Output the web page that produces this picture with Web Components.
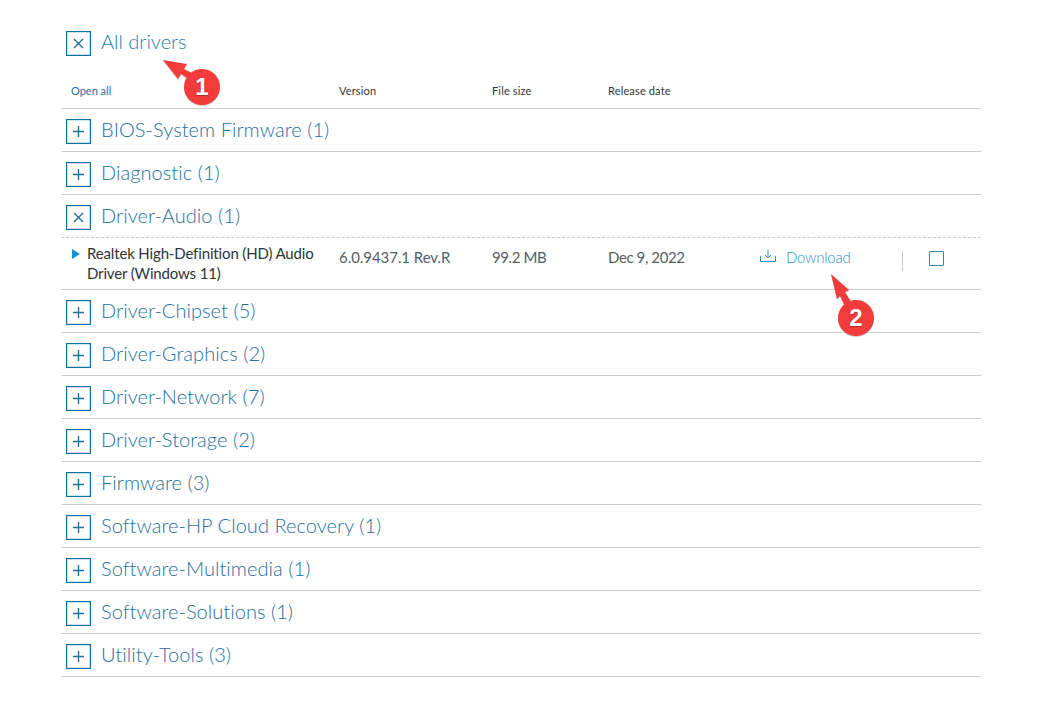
<!DOCTYPE html>
<html>
<head>
<meta charset="utf-8">
<title>All drivers</title>
<style>
  html, body { margin: 0; padding: 0; background: #ffffff; }
  body { font-family: Lato, "Noto Sans", sans-serif; overflow: hidden; }
</style>
</head>
<body>
<driver-list>
  <toggle-heading slot="heading" open>All drivers</toggle-heading>
  <driver-category label="BIOS-System Firmware (1)"></driver-category>
  <driver-category label="Diagnostic (1)"></driver-category>
  <driver-category label="Driver-Audio (1)" open>
    <driver-row version="6.0.9437.1 Rev.R" size="99.2 MB" date="Dec 9, 2022">Realtek High-Definition (HD) Audio Driver (Windows 11)</driver-row>
  </driver-category>
  <driver-category label="Driver-Chipset (5)"></driver-category>
  <driver-category label="Driver-Graphics (2)"></driver-category>
  <driver-category label="Driver-Network (7)"></driver-category>
  <driver-category label="Driver-Storage (2)"></driver-category>
  <driver-category label="Firmware (3)"></driver-category>
  <driver-category label="Software-HP Cloud Recovery (1)"></driver-category>
  <driver-category label="Software-Multimedia (1)"></driver-category>
  <driver-category label="Software-Solutions (1)"></driver-category>
  <driver-category label="Utility-Tools (3)"></driver-category>
</driver-list>
<step-callout number="1" style="left:202px;top:87px"></step-callout>
<step-callout number="2" style="left:856px;top:318px"></step-callout>

<script>
const PLUS = '<path d="M12.5 7v11M7 12.5h11"/>';
const CROSS = '<path d="M8 8l9 9M17 8l-9 9"/>';

class ToggleBox extends HTMLElement {
  connectedCallback() {
    const root = this.shadowRoot || this.attachShadow({ mode: 'open' });
    root.innerHTML = `
      <style>
        :host { display: block; width: 25px; height: 25px; flex: none; }
        svg { display: block; }
        rect { fill: none; stroke: #0b6fa4; stroke-width: 1.2; }
        path { fill: none; stroke: #1d6f9c; stroke-width: 1.4; }
      </style>
      <svg width="25" height="25" viewBox="0 0 25 25">
        <rect x=".6" y=".6" width="23.8" height="23.8"/>
        ${this.hasAttribute('open') ? CROSS : PLUS}
      </svg>`;
  }
}

class ToggleHeading extends HTMLElement {
  connectedCallback() {
    const root = this.attachShadow({ mode: 'open' });
    root.innerHTML = `
      <style>
        :host { display: flex; align-items: center; gap: 10px; height: 25px; padding-left: 5px; }
        span { font-size: 20px; font-weight: 300; color: #1f7fb0; position: relative; top: -3px; }
      </style>
      <toggle-box ${this.hasAttribute('open') ? 'open' : ''}></toggle-box>
      <span><slot></slot></span>`;
  }
}

class DriverCategory extends HTMLElement {
  connectedCallback() {
    const root = this.attachShadow({ mode: 'open' });
    const open = this.hasAttribute('open');
    root.innerHTML = `
      <style>
        :host { display: block; }
        .head { display: flex; align-items: center; gap: 10px; height: 42px; padding: 0 0 0 5px; box-sizing: border-box; }
        .head toggle-box { position: relative; top: 1px; }
        .label { font-size: 20px; font-weight: 300; color: #1f6f9e; letter-spacing: .05px; position: relative; top: -1px; white-space: nowrap; }
        .line { border-bottom: 1px solid #cccccc; }
      </style>
      <div class="head">
        <toggle-box ${open ? 'open' : ''}></toggle-box>
        <span class="label">${this.getAttribute('label')}</span>
      </div>
      ${open ? '<slot></slot>' : ''}
      <div class="line"></div>`;
  }
}

class DriverRow extends HTMLElement {
  connectedCallback() {
    const root = this.attachShadow({ mode: 'open' });
    root.innerHTML = `
      <style>
        :host {
          display: grid;
          grid-template-columns: 278px 153px 116px 152px 142px 27px 1fr;
          border-top: 1px dashed #cccccc;
          height: 52px;
          box-sizing: border-box;
          padding-top: 5px;
          font-size: 15px;
          color: #555c64;
        }
        .name { display: flex; gap: 7px; padding-left: 11px; color: #2f3338; line-height: 20px; letter-spacing: -.15px; }
        .name svg { flex: none; margin-top: 6px; }
        .cell { line-height: 20px; padding-top: 4px; white-space: nowrap; }
        .ver { letter-spacing: -.05px; }
        .tight { letter-spacing: -.4px; }
        .dl { display: flex; align-items: flex-start; gap: 10px; color: #2a93cf; font-weight: 300; }
        .dl svg { flex: none; margin-top: 2px; }
        .dl span { letter-spacing: -.25px; }
        .sep { width: 1px; height: 20px; background: #c8c8c8; margin-top: 8px; }
        .check { width: 13px; height: 13px; border: 1px solid #3a83ad; margin-top: 8px; border-radius: 1px; }
      </style>
      <div class="name">
        <svg width="8" height="10" viewBox="0 0 8 10"><path d="M0 0l8 5-8 5z" fill="#1492d6"/></svg>
        <span><slot></slot></span>
      </div>
      <div class="cell ver">${this.getAttribute('version')}</div>
      <div class="cell tight">${this.getAttribute('size')}</div>
      <div class="cell tight">${this.getAttribute('date')}</div>
      <div class="cell dl">
        <svg width="16" height="14" viewBox="0 0 16 14" fill="none" stroke="#2a93cf" stroke-width="1"><path d="M.5 7v5.5h15V7M8 .5v8M5 6l3 3 3-3"/></svg>
        <span>Download</span>
      </div>
      <div class="sep"></div>
      <div class="check"></div>`;
  }
}

class DriverList extends HTMLElement {
  connectedCallback() {
    const root = this.attachShadow({ mode: 'open' });
    root.innerHTML = `
      <style>
        :host { display: block; width: 920px; margin-left: 61px; padding-top: 31px; }
        .cols {
          display: grid;
          grid-template-columns: 278px 153px 116px 1fr;
          height: 53px;
          box-sizing: border-box;
          padding-top: 28px;
          border-bottom: 1px solid #cccccc;
          font-size: 11px;
          line-height: 14px;
          letter-spacing: .15px;
          color: #30353a;
        }
        .cols span:first-child { padding-left: 10px; color: #1f6f9e; letter-spacing: 0; }
      </style>
      <slot name="heading"></slot>
      <div class="cols"><span>Open all</span><span>Version</span><span>File size</span><span>Release date</span></div>
      <slot></slot>`;
  }
}

// numbered red marker with its arrow, drawn over the table
class StepCallout extends HTMLElement {
  connectedCallback() {
    const root = this.attachShadow({ mode: 'open' });
    const first = this.getAttribute('number') === '1';
    const arrow = first
      ? 'M-39 -27 L-15 -23 L-18 -18 L-2 -10 L-6 -3 L-21 -13 L-24 -8 Z'
      : 'M-25 -44 L-7 -28 L-11 -26 L-2 -12 L-9 -8 L-16 -22 L-19 -19 Z';
    root.innerHTML = `
      <style>
        :host { position: absolute; display: block; width: 0; height: 0; }
        svg { position: absolute; left: -50px; top: -50px; overflow: visible; }
        b {
          position: absolute; left: -18px; top: -18px; width: 36px; height: 36px;
          text-align: center; font: 700 24px/36px "Liberation Sans", sans-serif; color: #fff;
          text-shadow: 0 1px 1px rgba(0,0,0,.3);
        }
      </style>
      <svg width="100" height="100" viewBox="-50 -50 100 100">
        <path d="${arrow}" fill="#9b9b9b" opacity=".45" transform="translate(0 1)"/>
        <path d="${arrow}" fill="#f23c3c"/>
        <circle cx="0" cy="1" r="18" fill="#9b9b9b" opacity=".45"/>
        <circle r="18" fill="#f23c3c"/>
      </svg>
      <b>${this.getAttribute('number')}</b>`;
  }
}

customElements.define('toggle-box', ToggleBox);
customElements.define('toggle-heading', ToggleHeading);
customElements.define('driver-category', DriverCategory);
customElements.define('driver-row', DriverRow);
customElements.define('driver-list', DriverList);
customElements.define('step-callout', StepCallout);
</script>
</body>
</html>
